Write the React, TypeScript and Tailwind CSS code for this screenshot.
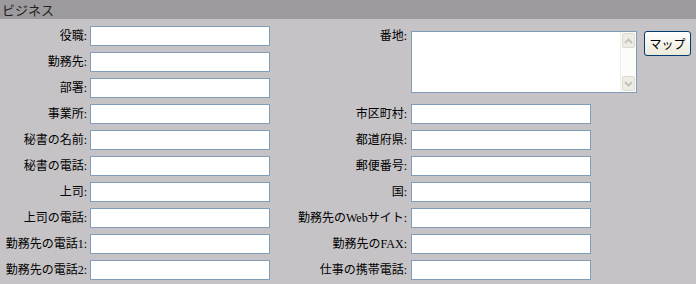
import React from "react";

const font = { fontFamily: '"Liberation Serif", "Noto Sans CJK JP", serif' };

function Label({ text, right }: { text: string; right?: boolean }) {
  return (
    <div
      className={`h-[20px] flex items-center justify-end text-[12px] leading-none text-black whitespace-nowrap ${right ? "pr-[4px]" : "pr-[3px]"}`}
      style={font}
    >
      {text}
    </div>
  );
}

function Field() {
  return <input className="h-[20px] w-[180px] border border-[#7f9db9] bg-white outline-none px-1 text-[12px]" />;
}

function Chevron({ up }: { up?: boolean }) {
  return (
    <svg width="9" height="6" viewBox="0 0 9 6">
      <path
        d={up ? "M1 5 L4.5 1.5 L8 5" : "M1 1 L4.5 4.5 L8 1"}
        fill="none"
        stroke="#c3c3c0"
        strokeWidth="2"
      />
    </svg>
  );
}

export default function App() {
  const left = ["役職:", "勤務先:", "部署:", "事業所:", "秘書の名前:", "秘書の電話:", "上司:", "上司の電話:", "勤務先の電話1:", "勤務先の電話2:"];
  const right = ["市区町村:", "都道府県:", "郵便番号:", "国:", "勤務先のWebサイト:", "勤務先のFAX:", "仕事の携帯電話:"];
  return (
    <div className="w-[696px] h-[284px] bg-[#c5c3c5] overflow-hidden">
      <div
        className="h-[19px] bg-[#9c9a9c] flex items-center pl-[2px] text-[13px] leading-none text-[#222]"
        style={{ fontFamily: '"Noto Sans CJK JP", sans-serif' }}
      >
        ビジネス
      </div>
      <div className="grid grid-cols-[90px_180px_141px_auto] gap-y-[6px] pt-[7px] auto-rows-[20px]">
        <Label text={left[0]} />
        <Field />
        <div className="row-span-3 self-start">
          <Label text="番地:" right />
        </div>
        <div className="row-span-3 flex items-start pt-[5px]">
          <div className="w-[226px] h-[62px] border border-[#7f9db9] bg-white flex">
            <textarea className="flex-1 resize-none outline-none bg-white" />
            <div className="w-[16px] flex flex-col justify-between bg-[#fcfcfb] border-l border-[#efefea] py-[1px]">
              <div className="h-[15px] mx-[1px] bg-[#eeede5] rounded-[2px] border border-[#dcdbd0] flex items-center justify-center">
                <Chevron up />
              </div>
              <div className="h-[15px] mx-[1px] bg-[#eeede5] rounded-[2px] border border-[#dcdbd0] flex items-center justify-center">
                <Chevron />
              </div>
            </div>
          </div>
          <button
            className="ml-[7px] w-[47px] h-[25px] border border-[#003c74] rounded-[3px] bg-gradient-to-b from-white to-[#ece9d8] text-[12px] leading-none text-black"
            style={{ fontFamily: '"Noto Sans CJK JP", sans-serif' }}
          >
            マップ
          </button>
        </div>
        <Label text={left[1]} />
        <Field />
        <Label text={left[2]} />
        <Field />
        {right.map((r, i) => (
          <React.Fragment key={r}>
            <Label text={left[i + 3]} />
            <Field />
            <Label text={r} right />
            <Field />
          </React.Fragment>
        ))}
      </div>
    </div>
  );
}
